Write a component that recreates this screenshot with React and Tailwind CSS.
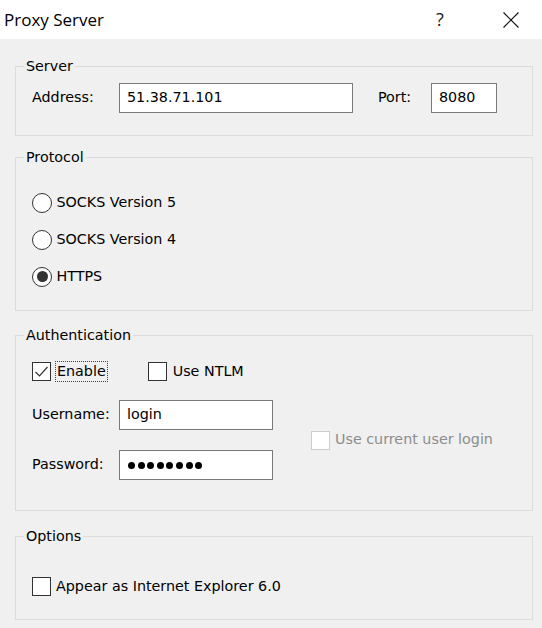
import React from "react";

function Group({ title, className, children }) {
  return (
    <fieldset className={`w-[518px] min-w-0 border border-[#dcdcdc] p-0 m-0 ${className}`}>
      <legend className="ml-[8px] px-[2px] leading-[18px] text-black">{title}</legend>
      {children}
    </fieldset>
  );
}

function CheckBox({ checked = false, disabled = false }) {
  return (
    <div
      className={`w-[19px] h-[19px] shrink-0 border bg-white flex items-center justify-center ${
        disabled ? "border-[#cccccc]" : "border-[#333333]"
      }`}
    >
      {checked && (
        <svg width="17" height="17" viewBox="0 0 17 17" fill="none">
          <polyline points="2.5,9 6.5,13 14.5,4" stroke="#333333" strokeWidth="1.2" />
        </svg>
      )}
    </div>
  );
}

function Radio({ checked = false, label }) {
  return (
    <div className="h-[37px] flex items-center">
      <div className="w-[20px] h-[20px] shrink-0 rounded-full border-[1.5px] border-[#333333] bg-white flex items-center justify-center">
        {checked && <div className="w-[11px] h-[11px] rounded-full bg-[#333333]" />}
      </div>
      <span className="ml-[4.5px] text-black">{label}</span>
    </div>
  );
}

function TextBox({ className, children }) {
  return (
    <div
      className={`h-[30px] shrink-0 border border-[#7a7a7a] bg-white pl-[7px] flex items-center text-black ${className}`}
    >
      {children}
    </div>
  );
}

export default function App() {
  return (
    <div className="w-[542px] h-[628px] overflow-hidden bg-[#f0f0f0] font-['DejaVu_Sans',sans-serif] text-[14.3px] text-black">
      {/* Title bar */}
      <div className="h-[39px] bg-white flex items-center pl-[4px]">
        <span className="flex-1 font-['Open_Sans','Noto_Sans',sans-serif] text-[17px] text-black">
          Proxy Server
        </span>
        <span className="w-[40px] text-center font-['Open_Sans','Noto_Sans',sans-serif] text-[18px] text-[#222222]">
          ?
        </span>
        <div className="w-[40px] ml-[31px] mr-[11px] flex items-center justify-center">
          <svg width="16" height="16" viewBox="0 0 16 16" fill="none">
            <line x1="0.5" y1="0.5" x2="15.5" y2="15.5" stroke="#111111" strokeWidth="1.1" />
            <line x1="15.5" y1="0.5" x2="0.5" y2="15.5" stroke="#111111" strokeWidth="1.1" />
          </svg>
        </div>
      </div>

      <div className="pl-[15px]">
        {/* Server */}
        <Group title="Server" className="mt-[18px]">
          <div className="flex items-center pt-[8px] pb-[22px] pl-[16px]">
            <span className="w-[87px]">Address:</span>
            <TextBox className="w-[234px]">51.38.71.101</TextBox>
            <span className="ml-[25px] w-[53px]">Port:</span>
            <TextBox className="w-[66px]">8080</TextBox>
          </div>
        </Group>

        {/* Protocol */}
        <Group title="Protocol" className="mt-[12px]">
          <div className="flex flex-col pt-[18px] pb-[15px] pl-[16px]">
            <Radio label="SOCKS Version 5" />
            <Radio label="SOCKS Version 4" />
            <Radio label="HTTPS" checked />
          </div>
        </Group>

        {/* Authentication */}
        <Group title="Authentication" className="mt-[15px]">
          <div className="flex flex-col pt-[17px] pb-[30px] pl-[16px]">
            <div className="h-[21px] flex items-center">
              <CheckBox checked />
              <span className="ml-[4px] h-[21px] px-[1px] flex items-center border border-dotted border-[#444444]">
                Enable
              </span>
              <div className="ml-[40px]">
                <CheckBox />
              </div>
              <span className="ml-[6px]">Use NTLM</span>
            </div>
            <div className="mt-[18px] flex items-center">
              <div className="flex flex-col gap-[20px]">
                <div className="flex items-center">
                  <span className="w-[87px]">Username:</span>
                  <TextBox className="w-[154px]">login</TextBox>
                </div>
                <div className="flex items-center">
                  <span className="w-[87px]">Password:</span>
                  <TextBox className="w-[154px] pl-[8px]">
                    <div className="flex items-center gap-[2.6px]" aria-label="password">
                      {[0, 1, 2, 3, 4, 5, 6, 7].map((i) => (
                        <div key={i} className="w-[7px] h-[7px] rounded-full bg-black" />
                      ))}
                    </div>
                  </TextBox>
                </div>
              </div>
              <div className="ml-[38px] flex items-center">
                <CheckBox disabled />
                <span className="ml-[5px] text-[#8c8c8c]">Use current user login</span>
              </div>
            </div>
          </div>
        </Group>

        {/* Options */}
        <Group title="Options" className="mt-[16px]">
          <div className="flex items-center h-[19px] box-content pt-[32px] pb-[23px] pl-[16px]">
            <CheckBox />
            <span className="ml-[5px]">Appear as Internet Explorer 6.0</span>
          </div>
        </Group>
      </div>
    </div>
  );
}
